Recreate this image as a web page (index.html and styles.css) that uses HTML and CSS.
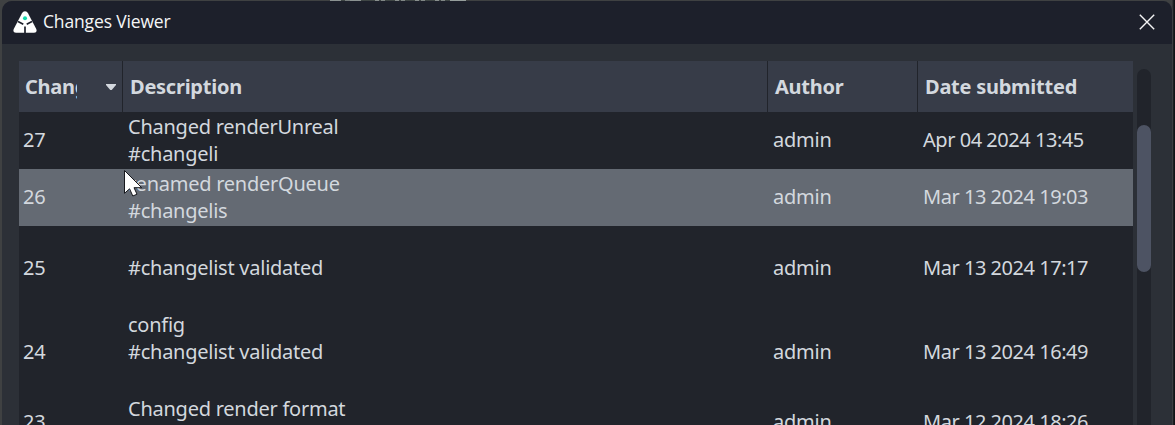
FILE: index.html
```html
<!DOCTYPE html>
<html lang="en">
<head>
<meta charset="utf-8">
<title>Changes Viewer</title>
<link rel="stylesheet" href="styles.css">
</head>
<body>
<div class="window">
  <header class="titlebar">
    <svg class="logo" width="24" height="22" viewBox="0 0 24 22">
      <path d="M12 0.3C13.4 0.3 14.3 1 15 2.3L23 17.5C24.3 20 23.2 21.7 21 21.7H3C0.8 21.7 -0.3 20 1 17.5L9 2.3C9.7 1 10.6 0.3 12 0.3Z" fill="#fff"/>
      <path d="M5 10.6L10.3 13.3M19 10.6L13.7 13.3M12 15.5V22" stroke="#1d202b" stroke-width="1.7" fill="none"/>
      <circle cx="12" cy="7.3" r="2" fill="#14d8ac"/>
    </svg>
    <h1 class="title">Changes Viewer</h1>
    <svg class="close" width="16" height="16" viewBox="0 0 16 16"><path d="M0.8 0.8L15.2 15.2M15.2 0.8L0.8 15.2" stroke="#f4f4f5" stroke-width="1.4"/></svg>
  </header>
  <main class="content">
    <div class="table">
      <div class="row head">
        <div class="cell sorted"><span class="clip">Changelist</span><svg width="10" height="6" viewBox="0 0 10 6"><path d="M0 0H10V1L5.7 6H4.3L0 1Z" fill="#d3d8de"/></svg></div>
        <div class="cell">Description</div>
        <div class="cell">Author</div>
        <div class="cell">Date submitted</div>
      </div>
      <div class="row"><div class="cell">27</div><div class="cell">Changed renderUnreal<br>#changeli</div><div class="cell">admin</div><div class="cell date">Apr 04 2024 13:45</div></div>
      <div class="row selected"><div class="cell">26</div><div class="cell">renamed renderQueue<br>#changelis</div><div class="cell">admin</div><div class="cell date">Mar 13 2024 19:03</div></div>
      <div class="row tall"><div class="cell">25</div><div class="cell">#changelist validated</div><div class="cell">admin</div><div class="cell date">Mar 13 2024 17:17</div></div>
      <div class="row tall"><div class="cell">24</div><div class="cell">config<br>#changelist validated<br>&nbsp;</div><div class="cell">admin</div><div class="cell date">Mar 13 2024 16:49</div></div>
      <div class="row"><div class="cell">23</div><div class="cell">Changed render format<br>&nbsp;</div><div class="cell">admin</div><div class="cell date">Mar 12 2024 18:26</div></div>
    </div>
    <div class="scrollbar"><div class="thumb"></div></div>
  </main>
</div>
<div class="backdrop"><i class="b1"></i><i class="b2"></i><i class="b3"></i></div>
<svg class="cursor" width="21" height="30" viewBox="0 0 21 30"><path d="M1.5 1.5V24.3L6.6 19.8L9.8 27L14 25.2L11 18.7H18.7Z" fill="#fff" stroke="#16181d" stroke-width="1"/></svg>
</body>
</html>
```
FILE: styles.css
```css
* { box-sizing: border-box; }
body {
  position: relative;
  margin: 0;
  width: 1175px;
  height: 425px;
  padding: 1px 2px 0;
  overflow: hidden;
  background: linear-gradient(90deg, #3f4142 0 1172px, #111418 1174px);
  font: 20px/27px "Noto Sans", sans-serif;
  letter-spacing: -0.25px;
  color: #d3d8de;
}
.window {
  width: 1171px;
  height: 440px;
  border-right: 1px solid #3b3e42;
  border-radius: 10px 10px 0 0;
  overflow: hidden;
  background: #2c3037;
}
.titlebar {
  display: flex;
  align-items: center;
  height: 43px;
  padding: 0 17px 2px 11px;
  background: #1d202b;
}
.title {
  margin: 0 auto 0 6px;
  padding-bottom: 2px;
  color: #f5f6f7;
  font: 400 17.5px/24px "Open Sans", sans-serif;
  letter-spacing: -0.15px;
}
.content {
  display: flex;
  padding: 17px 0 0 17px;
}
.table {
  width: 1114px;
  background: #21242b;
}
.row {
  display: grid;
  grid-template-columns: 105px 645px 150px 214px;
  align-items: center;
  height: 57px;
  padding-bottom: 2px;
}
.row.tall { height: 84px; }
.row.selected { background: #646a73; }
.cell { padding-left: 4px; white-space: nowrap; }
.date { letter-spacing: -0.47px; }
.row.head {
  height: 51px;
  padding-bottom: 0;
  grid-template-columns: 104px 645px 150px 215px;
  background: #373c48;
  font-weight: 700;
}
.head .cell {
  display: flex;
  align-items: center;
  height: 51px;
  padding-left: 7px;
  border-right: 1px solid #21242b;
}
.head .cell:last-child { border-right: 0; }
.head .sorted {
  justify-content: space-between;
  padding: 0 6px 0 6px;
}
.clip { width: 52px; overflow: hidden; }
.scrollbar {
  width: 14px;
  height: 400px;
  margin: 8px 0 0 4px;
  padding-top: 56px;
  border-radius: 7px;
  background: #21242b;
}
.thumb {
  height: 147px;
  border-radius: 7px;
  background: #4d5363;
}
.backdrop {
  position: absolute;
  top: 0;
  left: 330px;
  display: flex;
  height: 1px;
}
.b1 { width: 35px; background: repeating-linear-gradient(90deg, #8b9291 0 11px, #3f4645 11px 15px, #777e7d 15px 20px); }
.b2 { width: 85px; background: repeating-linear-gradient(90deg, #3f4645 0 10px, #898f8e 10px 14px, #3f4645 14px 16px, #818786 16px 20px); }
.b3 { width: 16px; background: #969e9c; }
.cursor { position: absolute; left: 123px; top: 169px; }
```
